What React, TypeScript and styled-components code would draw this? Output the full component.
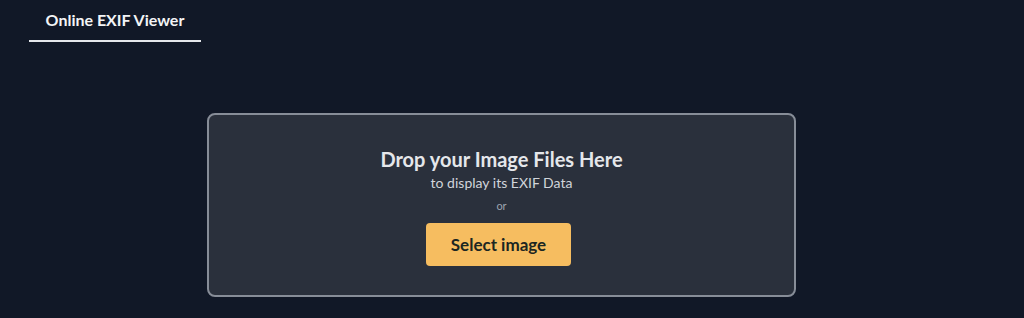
import React from 'react';
import styled, { createGlobalStyle } from 'styled-components';

const GlobalStyle = createGlobalStyle`
  html, body {
    margin: 0;
    padding: 0;
    background-color: #111827;
  }
  body {
    font-family: Lato, 'Noto Sans', sans-serif;
  }
`;

const Page = styled.div`
  min-height: 318px;
  background-color: #111827;
  display: flex;
  flex-direction: column;
`;

const TabBar = styled.nav`
  display: flex;
  padding: 0 0 0 29px;
`;

const Tab = styled.div<{ $active?: boolean }>`
  width: 172px;
  height: 42px;
  box-sizing: border-box;
  padding-top: 10px;
  text-align: center;
  color: #f3f4f6;
  font-size: 16px;
  font-weight: 700;
  border-bottom: 2px solid ${(p) => (p.$active ? '#e5e7eb' : 'transparent')};
`;

const Main = styled.main`
  display: flex;
  padding: 71px 0 0 207px;
`;

const DropZone = styled.div`
  width: 589px;
  height: 184px;
  box-sizing: border-box;
  border: 2px solid #878d98;
  border-radius: 8px;
  background-color: #2a303c;
  display: flex;
  flex-direction: column;
  align-items: center;
  padding-top: 31px;
`;

const Heading = styled.h2`
  margin: 0;
  color: #e5e7eb;
  font-size: 20px;
  font-weight: 700;
  line-height: 26px;
`;

const Subtitle = styled.p`
  margin: 0;
  color: #d1d5db;
  font-size: 14px;
  line-height: 22px;
`;

const Or = styled.span`
  color: #9ca3af;
  font-size: 11px;
  line-height: 16px;
  margin-top: 4px;
`;

const SelectButton = styled.button`
  margin: 9px 6px 0 0;
  width: 145px;
  height: 43px;
  border: none;
  border-radius: 4px;
  background-color: #f6bd60;
  color: #1c2622;
  font-family: Lato, 'Noto Sans', sans-serif;
  font-size: 17px;
  font-weight: 700;
  cursor: pointer;
`;

export default function App() {
  return (
    <Page>
      <GlobalStyle />
      <TabBar>
        <Tab $active>Online EXIF Viewer</Tab>
      </TabBar>
      <Main>
        <DropZone>
          <Heading>Drop your Image Files Here</Heading>
          <Subtitle>to display its EXIF Data</Subtitle>
          <Or>or</Or>
          <SelectButton>Select image</SelectButton>
        </DropZone>
      </Main>
    </Page>
  );
}
